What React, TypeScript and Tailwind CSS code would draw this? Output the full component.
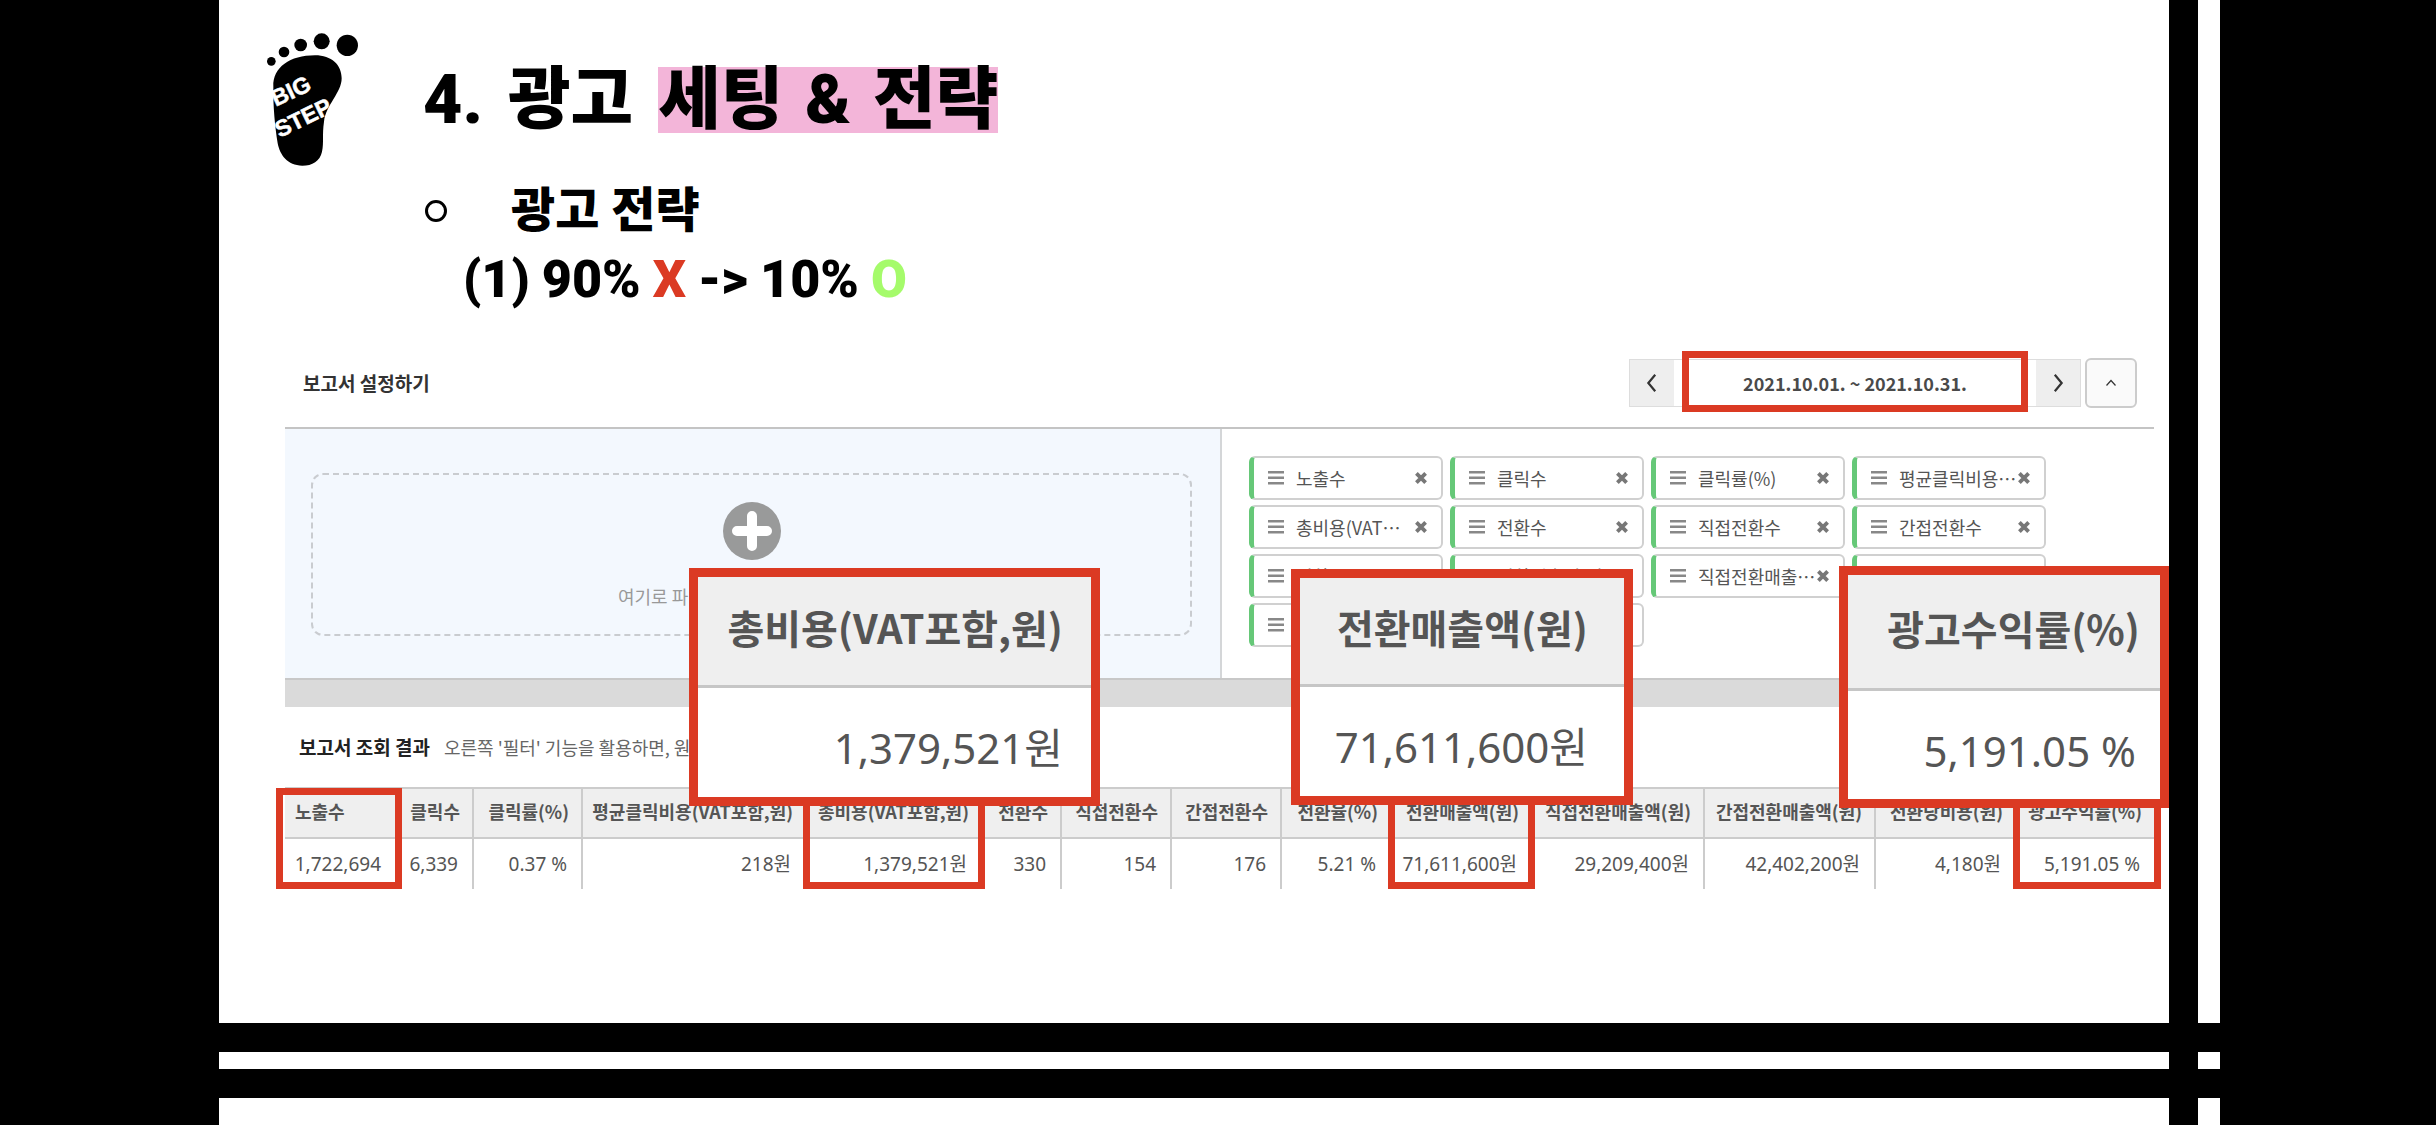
import React from "react"
import clsx from "clsx"

interface IColumn {
  name: string
  value: string
  width: number
  mark?: string
}

const columns: IColumn[] = [
  { name: "노출수", value: "1,722,694", width: 113, mark: "-left-[9px] -right-[5px]" },
  { name: "클릭수", value: "6,339", width: 75 },
  { name: "클릭률(%)", value: "0.37 %", width: 109 },
  { name: "평균클릭비용(VAT포함,원)", value: "218원", width: 224 },
  { name: "총비용(VAT포함,원)", value: "1,379,521원", width: 176, mark: "-left-1 -right-1" },
  { name: "전환수", value: "330", width: 79 },
  { name: "직접전환수", value: "154", width: 110 },
  { name: "간접전환수", value: "176", width: 110 },
  { name: "전환율(%)", value: "5.21 %", width: 110 },
  { name: "전환매출액(원)", value: "71,611,600원", width: 141, mark: "-left-1 -right-1" },
  { name: "직접전환매출액(원)", value: "29,209,400원", width: 172 },
  { name: "간접전환매출액(원)", value: "42,402,200원", width: 171 },
  { name: "전환당비용(원)", value: "4,180원", width: 141 },
  { name: "광고수익률(%)", value: "5,191.05 %", width: 138, mark: "-left-1 -right-[7px]" },
]

interface IChip {
  label: string
  cut?: boolean
}

const chips: IChip[] = [
  { label: "노출수" },
  { label: "클릭수" },
  { label: "클릭률(%)" },
  { label: "평균클릭비용", cut: true },
  { label: "총비용(VAT", cut: true },
  { label: "전환수" },
  { label: "직접전환수" },
  { label: "간접전환수" },
  { label: "전환율(%)" },
  { label: "전환매출액(원)" },
  { label: "직접전환매출", cut: true },
  { label: "" },
  { label: "" },
  { label: "" },
]

function FootLogo() {
  return (
    <svg viewBox="0 0 420 510" className="w-[140px] h-[170px] shrink-0" role="img" aria-label="BIG STEP">
      <circle cx="94" cy="154" r="13" />
      <circle cx="132" cy="126" r="16" />
      <circle cx="182" cy="105" r="19" />
      <circle cx="245" cy="94" r="24" />
      <circle cx="322" cy="106" r="32" />
      <path d="M100 230C98 172 150 136 225 136C275 136 305 165 305 205C305 248 258 285 252 335C246 375 252 395 246 425C240 453 217 467 187 467C142 467 120 435 113 400C105 350 99 290 100 230Z" />
      <g fill="#fff" stroke="#fff" strokeWidth="1.5" fontFamily="Liberation Sans, sans-serif" fontWeight="700" fontSize="69">
        <text transform="translate(107 290) rotate(-25)">BIG</text>
        <text transform="translate(119 384) rotate(-26)">STEP</text>
      </g>
    </svg>
  )
}

function Chevron({ d, className }: { d: string, className?: string }) {
  return (
    <svg viewBox="0 0 24 24" className={className} fill="none" stroke="#333" strokeWidth="2.4" aria-hidden="true">
      <path d={d} />
    </svg>
  )
}

function Chip({ label, cut }: IChip) {
  return (
    <li className="flex items-center h-11 rounded-md border-2 border-[#d0d0d0] border-l-[5px] border-l-[#66c878] bg-white pl-3.5 pr-3.5">
      <svg viewBox="0 0 16 14" className="w-4 h-3.5 shrink-0 fill-[#888]" aria-hidden="true">
        <path d="M0 0h16v2.6H0zM0 5.5h16v2.6H0zM0 11h16v2.6H0z" />
      </svg>
      <span className="ml-3 flex flex-1 whitespace-nowrap text-lg text-[#555]">
        {label}
        {cut && <span>⋯</span>}
      </span>
      <button type="button" aria-label="삭제" className="shrink-0">
        <svg viewBox="0 0 12 12" className="w-3 h-3" stroke="#777" strokeWidth="3.8" aria-hidden="true">
          <path d="M1.4 1.4l9.2 9.2M10.6 1.4l-9.2 9.2" />
        </svg>
      </button>
    </li>
  )
}

interface ICallout {
  title: string
  value: string
  className: string
  headClass: string
  valueClass: string
}

function Callout({ title, value, className, headClass, valueClass }: ICallout) {
  return (
    <div className={clsx("absolute flex flex-col border-[9px] border-[#db3a23] bg-white text-[#555] whitespace-nowrap", className)}>
      <div className={clsx("flex items-center justify-end border-b-[3px] border-[#c6c6c6] bg-[#efefef] pb-2 text-[40px] font-bold", headClass)}>
        {title}
      </div>
      <div className={clsx("flex flex-1 items-center justify-end pt-2.5 text-[42px] font-['Noto_Sans','Noto_Sans_CJK_KR',sans-serif]", valueClass)}>
        {value}
      </div>
    </div>
  )
}

function Report() {
  return (
    <section className="relative mt-[27px] ml-[66px] mr-[15px]">
      {/* Title and period */}
      <div className="flex h-[90px] items-center justify-between pl-[18px] pr-[17px] border-b-2 border-[#c4c4c4]">
        <h3 className="text-[19px] font-bold text-[#333]">보고서 설정하기</h3>
        <div className="flex items-center gap-1">
          <div className="relative flex h-12 border border-[#ddd]">
            <button type="button" aria-label="이전" className="flex w-11 items-center justify-center bg-[#eee]">
              <Chevron d="M15.5 3L8 12l7.5 9" className="w-[22px]" />
            </button>
            <input
              readOnly
              aria-label="조회 기간"
              value="2021.10.01. ~ 2021.10.31."
              className="w-[362px] text-center text-lg font-bold text-[#4a4a4a]"
            />
            <button type="button" aria-label="다음" className="flex w-11 items-center justify-center bg-[#eee]">
              <Chevron d="M8.5 3L16 12l-7.5 9" className="w-[22px]" />
            </button>
            <span className="pointer-events-none absolute left-[52px] right-[52px] -top-[9px] -bottom-[6px] border-[7px] border-[#db3a23]" />
          </div>
          <button type="button" aria-label="접기" className="flex h-[50px] w-[52px] items-center justify-center rounded-md border-2 border-[#ccc] bg-[#fafafa]">
            <Chevron d="M3 17l9-10 9 10" className="w-3" />
          </button>
        </div>
      </div>

      {/* Drop area and selected fields */}
      <div className="flex h-[249px]">
        <div className="flex-1 bg-[#f3f8fe] pt-11 pl-[26px] pr-7">
          <div className="flex h-[163px] flex-col items-center rounded-xl border-2 border-dashed border-[#c9ccd0] pt-[27px]">
            <svg viewBox="0 0 58 58" className="w-[58px] h-[58px]" aria-hidden="true">
              <circle cx="29" cy="29" r="29" fill="#999a9a" />
              <path d="M29 14v30M14 29h30" stroke="#fff" strokeWidth="10" strokeLinecap="round" />
            </svg>
            <p className="mt-[22px] w-[267px] text-lg text-[#999]">여기로 파</p>
          </div>
        </div>
        <div className="w-[934px] border-l-2 border-[#d4d6d8] pt-[27px] pl-[27px]">
          <ul className="grid grid-cols-[repeat(4,194px)] gap-x-[7px] gap-y-[5px]">
            {chips.map((c, i) => <Chip key={i} label={c.label} cut={c.cut} />)}
          </ul>
        </div>
      </div>
      <div className="h-[29px] border-t-2 border-[#c8c8c8] bg-[#dadada]" />

      {/* Result table */}
      <div className="flex h-20 items-center gap-3.5 pl-3.5 whitespace-nowrap">
        <h3 className="text-[19px] font-bold text-[#222]">보고서 조회 결과</h3>
        <p className="text-lg text-[#666]">오른쪽 '필터' 기능을 활용하면, 원</p>
      </div>
      <table className="w-full table-fixed border-collapse text-right text-lg whitespace-nowrap text-[#555]">
        <colgroup>
          {columns.map((c) => <col key={c.name} style={{ width: c.width }} />)}
        </colgroup>
        <thead>
          <tr className="h-[50px] border-y-2 border-[#ccc] bg-[#efefef]">
            {columns.map((c, i) => (
              <th key={c.name} scope="col" className={clsx("relative p-0 pb-1 font-bold", i === 0 ? "pl-2.5 text-left" : "pr-3", i < 13 && "border-r-2 border-[#ccc]")}>
                {c.name}
                {c.mark && <span className={clsx("absolute -top-px h-[101px] border-[7px] border-[#db3a23]", c.mark)} />}
              </th>
            ))}
          </tr>
        </thead>
        <tbody className="text-[19px] font-['Noto_Sans','Noto_Sans_CJK_KR',sans-serif]">
          <tr className="h-[51px]">
            {columns.map((c, i) => (
              <td key={c.name} className={clsx("p-0 pt-0.5", i === 0 ? "pr-4" : "pr-3.5", i < 13 && "border-r-2 border-[#ccc]")}>{c.value}</td>
            ))}
          </tr>
        </tbody>
      </table>

      <Callout title="총비용(VAT포함,원)" value="1,379,521원" className="left-[404px] top-[229px] h-[238px] w-[411px]" headClass="h-[111px] pr-7" valueClass="pr-7" />
      <Callout title="전환매출액(원)" value="71,611,600원" className="left-[1006px] top-[230px] h-[236px] w-[342px]" headClass="h-[109px] pr-9" valueClass="pr-9" />
      <Callout title="광고수익률(%)" value="5,191.05 %" className="-right-[15px] top-[227px] h-[242px] w-[330px]" headClass="h-[116px] pr-5" valueClass="pr-6" />
    </section>
  )
}

export default function App() {
  return (
    <div className="min-h-screen grid grid-cols-[1fr_22px] grid-rows-[1fr_17px_27px] gap-[29px] bg-black pl-[219px] pr-[216px] font-['Noto_Sans_CJK_KR',sans-serif]">
      <main className="bg-white">
        <div className="flex pl-[21px]">
          <div className="pt-2.5 pr-[43px]">
            <FootLogo />
          </div>
          <div className="pt-[67px] font-['Roboto','Noto_Sans_CJK_KR',sans-serif] font-black text-black whitespace-nowrap">
            <h1 className="flex gap-[25px] text-[68px] leading-[66px]">
              <span>4.</span>
              <span>광고</span>
              <span className="flex gap-[22px] bg-[#f3b5d9]">
                <span>세팅</span>
                <span>&amp;</span>
                <span>전략</span>
              </span>
            </h1>
            <h2 className="mt-10 flex items-center gap-16 pl-0.5 text-5xl leading-[75px]">
              <span className="h-[22px] w-[22px] rounded-full border-[3px] border-black" />
              광고 전략
            </h2>
            <p className="flex gap-3 pl-10 text-[52px] leading-[64px]">
              <span>(1)</span>
              <span>90%</span>
              <span className="text-[#db3a23]">X</span>
              <span>-&gt;</span>
              <span>10%</span>
              <span className="text-[#a5fb6b]">O</span>
            </p>
          </div>
        </div>
        <Report />
      </main>
      <div className="bg-white" />
      <div className="bg-white" />
      <div className="bg-white" />
      <div className="bg-white" />
      <div className="bg-white" />
    </div>
  )
}
